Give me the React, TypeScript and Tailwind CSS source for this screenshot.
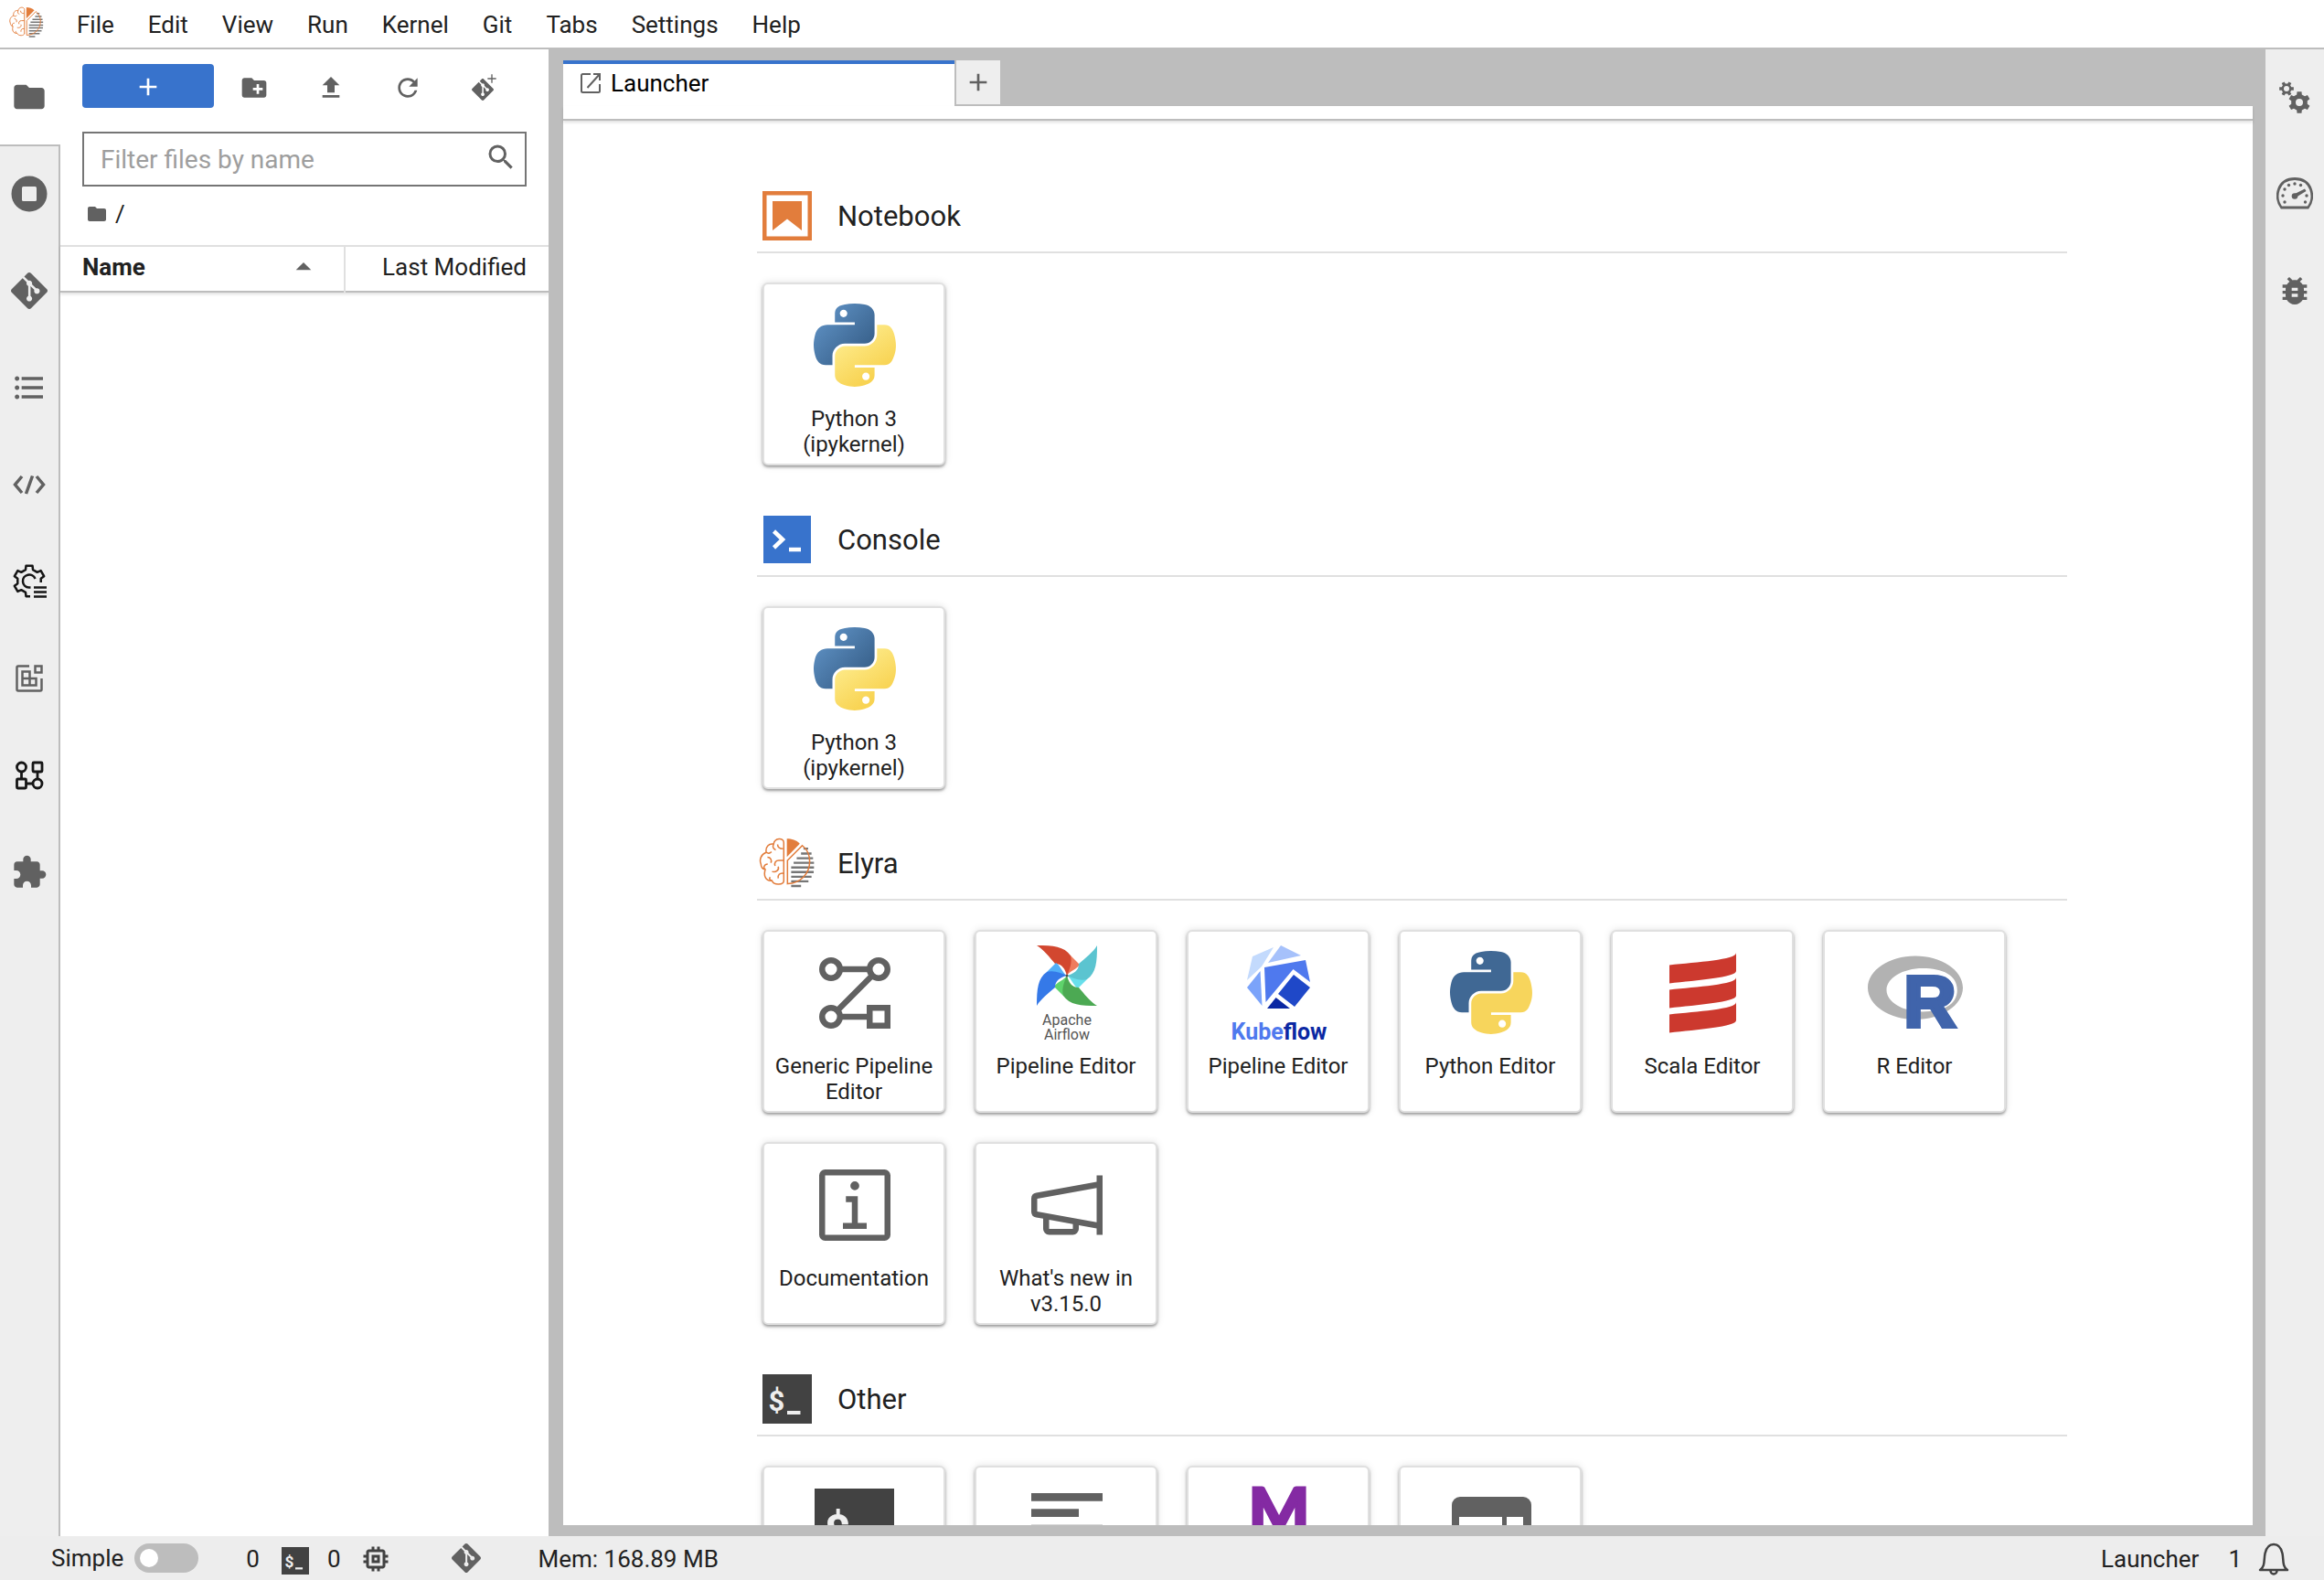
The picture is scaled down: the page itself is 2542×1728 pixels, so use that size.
import { useId, useState } from "react";
import type { ReactNode } from "react";
import {
  MdAdd,
  MdArrowDropUp,
  MdBugReport,
  MdCreateNewFolder,
  MdExtension,
  MdFileUpload,
  MdFolder,
  MdFormatAlignLeft,
  MdFormatListBulleted,
  MdMemory,
  MdRefresh,
  MdSearch,
} from "react-icons/md";
import { SiGit } from "react-icons/si";

const MENUS = ["File", "Edit", "View", "Run", "Kernel", "Git", "Tabs", "Settings", "Help"];

// Outline of a cog centred on cx, cy
function gearPath(cx: number, cy: number, outer: number, inner: number, teeth: number, start = -90) {
  const step = 360 / teeth;
  const points: string[] = [];
  for (let i = 0; i < teeth; i++) {
    const a = start + i * step;
    const corners = [
      [inner, -0.3],
      [outer, -0.2],
      [outer, 0.2],
      [inner, 0.3],
    ];
    corners.forEach(([r, k]) => {
      const rad = ((a + k * step) * Math.PI) / 180;
      points.push(`${(cx + r * Math.cos(rad)).toFixed(2)} ${(cy + r * Math.sin(rad)).toFixed(2)}`);
    });
  }
  return `M${points.join("L")}Z`;
}

function ElyraLogo({ className }: { className: string }) {
  return (
    <svg viewBox="18 18 182 166" className={className} fill="none" stroke="#e27d3c" strokeWidth="4.5">
      <g stroke="#767676" strokeWidth="7">
        <path d="M162 54h15M154 70h34M140 85h53M130 100h66M122 115h74M122 130h73M122 145h66M122 160h56M122 175h32" />
      </g>
      <path d="M108 22C124 22 138 26 150 38L108 81Z" fill="#e27d3c" stroke="none" />
      <path d="M110 92L158 44C176 58 182 76 182 96C182 136 152 166 110 168Z" />
      <path d="M98 160V34C98 18 68 18 65 40C60 50 66 56 72 58M65 39C50 36 38 48 41 66C24 72 18 90 24 104C24 114 30 120 38 122C32 140 38 160 60 158C66 174 98 172 98 158" />
      <path d="M78 40C78 50 84 54 96 54M41 66C46 70 54 70 58 64M45 82C56 82 60 92 56 100M38 120C30 118 34 104 46 104M98 92H82C72 92 66 100 70 110M80 112C84 124 72 132 60 128M60 158C52 156 50 150 54 146M98 134C84 132 78 140 80 150" />
    </svg>
  );
}

function PythonLogo({ gradient = false }: { gradient?: boolean }) {
  const id = useId();
  return (
    <svg viewBox="0 0 111.2 112.4" className="h-[91px] w-[90px]">
      <defs>
        <linearGradient id={`${id}b`} x1="0.1" y1="0.1" x2="0.8" y2="0.75">
          <stop offset="0" stopColor="#5f92c5" />
          <stop offset="1" stopColor="#3b648f" />
        </linearGradient>
        <linearGradient id={`${id}y`} x1="0.2" y1="0.25" x2="0.6" y2="0.85">
          <stop offset="0" stopColor="#fde986" />
          <stop offset="1" stopColor="#f8d352" />
        </linearGradient>
      </defs>
      <path
        fill={gradient ? `url(#${id}b)` : "#406894"}
        d="M54.92 0C50.34.02 45.96.41 42.11 1.09 30.76 3.1 28.7 7.29 28.7 15.03v10.22h26.81v3.41H18.64c-7.79 0-14.62 4.68-16.75 13.59-2.46 10.21-2.57 16.59 0 27.25 1.91 7.94 6.46 13.59 14.25 13.59h9.22V70.84c0-8.85 7.66-16.65 16.75-16.65h26.78c7.46 0 13.41-6.14 13.41-13.63V15.03c0-7.26-6.13-12.72-13.41-13.93C64.28.33 59.5-.02 54.92 0zM40.42 8.22c2.77 0 5.03 2.3 5.03 5.12 0 2.82-2.26 5.1-5.03 5.1-2.78 0-5.03-2.28-5.03-5.1 0-2.82 2.25-5.12 5.03-5.12z"
      />
      <path
        fill={gradient ? `url(#${id}y)` : "#f7d55c"}
        d="M85.64 28.66v11.9c0 9.23-7.83 17-16.75 17H42.11c-7.34 0-13.41 6.28-13.41 13.63v25.53c0 7.27 6.32 11.54 13.41 13.62 8.49 2.5 16.62 2.95 26.78 0 6.75-1.95 13.4-5.88 13.4-13.62V86.5H55.51v-3.41h40.19c7.79 0 10.7-5.43 13.41-13.59 2.8-8.4 2.68-16.48 0-27.25-1.93-7.76-5.61-13.59-13.41-13.59H85.64zM70.58 93.31c2.77 0 5.03 2.28 5.03 5.1 0 2.82-2.26 5.12-5.03 5.12-2.77 0-5.04-2.3-5.04-5.12 0-2.82 2.27-5.1 5.04-5.1z"
      />
    </svg>
  );
}

function NotebookIcon() {
  return (
    <svg viewBox="0 0 54 54" className="size-[54px]" fill="#e27d3c">
      <path fillRule="evenodd" d="M0 0h54v54H0zM4.500 4.500v45h45v-45z" />
      <path d="M11 11h32v32L27 30.500 11 43z" />
    </svg>
  );
}

function ConsoleIcon() {
  return (
    <svg viewBox="0 0 52 52" className="mx-px size-[52px]" fill="none" stroke="#fff" strokeWidth="4.500">
      <path fill="#3873cc" stroke="none" d="M0 0h52v52H0z" />
      <path d="M11.500 17l9.500 9-9.500 9M28 37h13" />
    </svg>
  );
}

function TerminalIcon({ className }: { className: string }) {
  return (
    <svg viewBox="0 0 54 54" className={className}>
      <path fill="#424242" d="M0 0h54v54H0z" />
      <text x="6.500" y="40" fontFamily="Roboto, sans-serif" fontWeight="700" fontSize="31" fill="#eee">
        $
      </text>
      <path fill="#eee" d="M27 40h14.500v4H27z" />
    </svg>
  );
}

function GenericPipelineIcon() {
  return (
    <svg viewBox="0 0 32 32" className="size-[104px]" fill="none" stroke="#616161" strokeWidth="2">
      <circle cx="8" cy="8" r="3" />
      <circle cx="24" cy="8" r="3" />
      <circle cx="8" cy="24" r="3" />
      <path d="M21 21h6v6h-6zM11 8h10M11 24h10M10.100 21.900L21.900 10.100" />
    </svg>
  );
}

function AirflowIcon() {
  const blades = [
    ["0", "#d2472f", "#ef7c5d"],
    ["90", "#5bc4d0", "#68dfeb"],
    ["180", "#4ca953", "#5fd36c"],
    ["270", "#3579e8", "#52aff8"],
  ];
  return (
    <svg viewBox="-19 -4 104 112" className="h-28 w-[104px]">
      {blades.map(([angle, dark, light]) => (
        <g key={angle} transform={`rotate(${angle} 33 33)`}>
          <path fill={light} d="M37 11L47 21C44 26 36 28 33 33Z" />
          <path fill={dark} d="M0 0C18 0 30 1 37 11C39 19 36 26 33 33C31 26 28 20 20 20C15 14 7 4 0 0Z" />
        </g>
      ))}
      <circle cx="33" cy="33" r="1.500" fill="#51504f" />
      <g fontFamily="Roboto, sans-serif" fontSize="16" fill="#555" textAnchor="middle">
        <text x="33" y="87">Apache</text>
        <text x="33" y="103">Airflow</text>
      </g>
    </svg>
  );
}

function KubeflowIcon() {
  return (
    <svg viewBox="-20 -8 110 120" className="h-[120px] w-[110px]">
      <path fill="#c3dafd" d="M6 12L29 2 16 23 0 38z" />
      <path fill="#a6c1fb" d="M37 0L59 11 23 19z" />
      <path fill="#4f79ee" d="M19 24L64 16 69 40 50.500 26 20.500 62z" />
      <path fill="#7ba3fa" d="M14.500 28L0 46 16.500 66z" />
      <path fill="#1f48c8" d="M51 32L69 46 52 67 34 53z" />
      <path fill="#0b28a3" d="M31.600 57L47 69H22z" />
      <text x="35" y="103" fontFamily="Roboto, sans-serif" fontWeight="700" fontSize="25" textAnchor="middle" fill="#4f79ee">
        Kube<tspan fill="#0b28a3">flow</tspan>
      </text>
    </svg>
  );
}

function ScalaIcon() {
  return (
    <svg viewBox="0 0 73 88" className="h-[88px] w-[73px]" fill="#cc392e">
      <path d="M0 13.500C30 10 73 8 73 0V20C73 27 30 30 0 33.500z" />
      <path d="M0 40.500C30 37 73 35 73 27V47C73 54 30 57 0 60.500z" />
      <path d="M0 67.500C30 64 73 62 73 54V74C73 81 30 84 0 87.500z" />
    </svg>
  );
}

function RIcon() {
  return (
    <svg viewBox="0 0 104 81" className="h-[81px] w-[104px] overflow-visible">
      <path
        fill="#b2b2b2"
        fillRule="evenodd"
        d="M52 .4C23.300 .4 0 16 0 35.200S23.300 69.900 52 69.900 104 54.400 104 35.200 80.700.4 52 .4zM60 14C81.700 14 97.800 21.300 97.800 37.800S81.700 61.500 60 61.500 20.500 50.900 20.500 37.800 38.200 14 60 14z"
      />
      <text
        x="39"
        y="78"
        fontFamily="Liberation Sans, sans-serif"
        fontWeight="700"
        fontSize="80"
        fill="#4064ab"
        stroke="#4064ab"
        strokeWidth="4"
      >
        R
      </text>
    </svg>
  );
}

function InfoIcon() {
  return (
    <svg viewBox="0 0 32 32" className="size-[104px]" fill="#616161">
      <path d="M17 22v-9h-4v2h2v7h-3v2h8v-2zM16 8a1.500 1.500 0 1 0 0 3 1.500 1.500 0 0 0 0-3z" />
      <path d="M26 28H6a2 2 0 0 1-2-2V6a2 2 0 0 1 2-2h20a2 2 0 0 1 2 2v20a2 2 0 0 1-2 2zM6 6v20h20V6z" />
    </svg>
  );
}

function MegaphoneIcon() {
  return (
    <svg viewBox="0 0 32 32" className="size-[104px]" fill="#616161">
      <path d="M26 6v2.170L5.640 11.870A2 2 0 0 0 4 13.830v4.340a2 2 0 0 0 1.640 2L8 20.560V24a2 2 0 0 0 2 2h8a2 2 0 0 0 2-2v-1.260l6 1.090V26h2V6zm-8 18h-8v-3.070l8 1.450zM6 18.170v-4.340l20-3.630v11.600z" />
    </svg>
  );
}

function MarkdownIcon() {
  return (
    <svg viewBox="0 0 104 104" className="size-[104px]" fill="#842aa3">
      <text
        x="52"
        y="58"
        fontFamily="Lato, sans-serif"
        fontWeight="900"
        fontSize="70"
        textAnchor="middle"
        stroke="#842aa3"
        strokeWidth="3"
      >
        M
      </text>
      <path d="M24 70h57L52 98z" />
    </svg>
  );
}

function HelpPanelIcon() {
  return (
    <svg viewBox="0 0 104 104" className="size-[104px]">
      <rect x="9" y="17" width="87" height="70" rx="9" fill="#616161" />
      <path fill="#fff" d="M17 39h47v40H17zM69 39h18v40H69z" />
    </svg>
  );
}

function RunningIcon() {
  return (
    <svg viewBox="0 0 40 40" className="size-10">
      <circle cx="20" cy="20" r="19.500" fill="#616161" />
      <rect x="12" y="12" width="16" height="16" rx="1.500" fill="#eee" />
    </svg>
  );
}

function SnippetIcon() {
  return (
    <svg viewBox="0 0 40 40" className="size-10" fill="none" stroke="#616161" strokeWidth="3.500">
      <path d="M12 11L4.500 20 12 29M28 11l7.500 9-7.500 9M23.500 10.500l-7 19.500" />
    </svg>
  );
}

function RuntimesIcon() {
  return (
    <svg viewBox="0 0 40 40" className="size-10" fill="none" stroke="#161616" strokeWidth="2.500">
      <path d={gearPath(20, 19.500, 17, 13, 6)} strokeLinejoin="round" />
      <path fill="#eee" stroke="none" d="M21 26h5l2-5 12 0v19H21z" />
      <path d="M26.500 17a7 7 0 1 0-7 9.500h2M25 26.500h14M25 31.500h14M25 36.500h14" />
    </svg>
  );
}

function CatalogIcon() {
  return (
    <svg viewBox="0 0 40 40" className="size-10" fill="none" stroke="#616161" strokeWidth="2.500">
      <path d="M20 6.500H8A1.500 1.500 0 0 0 6.500 8v24A1.500 1.500 0 0 0 8 33.500h24a1.500 1.500 0 0 0 1.500-1.500V20" />
      <path d="M26.500 6.500h7v7h-7zM12.500 12.500h8v15h-8zM12.500 20h15v7.500h-15z" />
    </svg>
  );
}

function PipelinesIcon() {
  return (
    <svg viewBox="0 0 40 40" className="size-10" fill="none" stroke="#161616" strokeWidth="2.800">
      <circle cx="11.500" cy="11" r="5" />
      <rect x="24" y="6" width="10" height="10" rx="1" />
      <rect x="6.500" y="24" width="10" height="10" rx="1" />
      <circle cx="29" cy="29" r="5" />
      <path d="M11.500 16v8M29 16v8M16.500 29H24" />
    </svg>
  );
}

function GearsIcon() {
  return (
    <svg viewBox="0 0 40 40" className="size-10" fill="#616161" fillRule="evenodd">
      <path d={`${gearPath(11, 11, 8, 5.500, 6, -60)}M11 8a3 3 0 1 0 0 6 3 3 0 0 0 0-6z`} />
      <path d={`${gearPath(25, 26, 12, 9, 6)}M25 22a4 4 0 1 0 0 8 4 4 0 0 0 0-8z`} />
    </svg>
  );
}

function GaugeIcon() {
  const dots = [
    [7, 20],
    [9, 13],
    [13.500, 8.500],
    [20, 7],
    [26.500, 8.500],
    [33, 20],
    [9, 27],
    [31.500, 27],
  ];
  return (
    <svg viewBox="0 0 40 36" className="h-9 w-10" fill="#616161">
      <path fill="none" stroke="#616161" strokeWidth="2.800" d="M5.500 33C-3 22 1 1.500 20 1.500S43 22 34.500 33z" />
      {dots.map(([x, y]) => (
        <circle key={`${x}-${y}`} cx={x} cy={y} r="1.700" />
      ))}
      <circle cx="20" cy="20.500" r="3.300" />
      <path d="M19 18.500L31 12.500l1.500 2.500L21 22z" />
    </svg>
  );
}

function GitCloneIcon() {
  return (
    <span className="relative block size-8 text-[#616161]">
      <SiGit className="absolute bottom-0.5 left-0.5 size-6" />
      <MdAdd className="absolute -top-0.5 right-0 size-4" />
    </span>
  );
}

function LauncherTabIcon() {
  return (
    <svg viewBox="0 0 24 24" className="size-6" fill="none" stroke="#616161" strokeWidth="2">
      <path d="M12 2H3.500A1.500 1.500 0 0 0 2 3.500v17A1.500 1.500 0 0 0 3.500 22h17a1.500 1.500 0 0 0 1.500-1.500V13M15 2h7v7M22 2L8.500 17" />
    </svg>
  );
}

function BellIcon() {
  return (
    <svg viewBox="0 0 34 36" className="h-9 w-[34px]" fill="none" stroke="#424242" strokeWidth="2.500">
      <path d="M2 30C8 26 6 19 7.500 12 9 5 13 2 17 2s8 3 9.500 10C28 19 26 26 32 30z" strokeLinejoin="round" />
      <path d="M13.500 31a3.500 3.500 0 0 0 7 0" />
    </svg>
  );
}

const LEFT_TABS: { label: string; icon: ReactNode }[] = [
  { label: "File Browser", icon: <MdFolder className="size-10" /> },
  { label: "Running Terminals and Kernels", icon: <RunningIcon /> },
  { label: "Git", icon: <SiGit className="size-10" /> },
  { label: "Table of Contents", icon: <MdFormatListBulleted className="size-10" /> },
  { label: "Code Snippets", icon: <SnippetIcon /> },
  { label: "Runtimes", icon: <RuntimesIcon /> },
  { label: "Component Catalogs", icon: <CatalogIcon /> },
  { label: "Runtime Images", icon: <PipelinesIcon /> },
  { label: "Extension Manager", icon: <MdExtension className="size-10" /> },
];

const RIGHT_TABS: { label: string; icon: ReactNode }[] = [
  { label: "Property Inspector", icon: <GearsIcon /> },
  { label: "Kernel Usage", icon: <GaugeIcon /> },
  { label: "Debugger", icon: <MdBugReport className="size-10" /> },
];

type Section = {
  title: string;
  icon: ReactNode;
  cards: { label: string; icon: ReactNode }[];
};

const SECTIONS: Section[] = [
  {
    title: "Notebook",
    icon: <NotebookIcon />,
    cards: [{ label: "Python 3 (ipykernel)", icon: <PythonLogo gradient /> }],
  },
  {
    title: "Console",
    icon: <ConsoleIcon />,
    cards: [{ label: "Python 3 (ipykernel)", icon: <PythonLogo gradient /> }],
  },
  {
    title: "Elyra",
    icon: <ElyraLogo className="-mx-1 h-[56px] w-[62px]" />,
    cards: [
      { label: "Generic Pipeline Editor", icon: <GenericPipelineIcon /> },
      { label: "Pipeline Editor", icon: <AirflowIcon /> },
      { label: "Pipeline Editor", icon: <KubeflowIcon /> },
      { label: "Python Editor", icon: <PythonLogo /> },
      { label: "Scala Editor", icon: <ScalaIcon /> },
      { label: "R Editor", icon: <RIcon /> },
      { label: "Documentation", icon: <InfoIcon /> },
      { label: "What's new in v3.15.0", icon: <MegaphoneIcon /> },
    ],
  },
  {
    title: "Other",
    icon: <TerminalIcon className="size-[54px]" />,
    cards: [
      { label: "Terminal", icon: <TerminalIcon className="size-[87px]" /> },
      { label: "Text File", icon: <MdFormatAlignLeft className="size-[104px] text-[#616161]" /> },
      { label: "Markdown File", icon: <MarkdownIcon /> },
      { label: "Show Contextual Help", icon: <HelpPanelIcon /> },
    ],
  },
];

function LauncherSection({ title, icon, cards }: Section) {
  return (
    <section className="mb-[49px]">
      <div className="flex items-center gap-7 border-b-2 border-[#e0e0e0] pb-[7px] pl-1.5">
        <div className="flex h-16 items-center">{icon}</div>
        <h2 className="pt-0.5 text-[31px] leading-10">{title}</h2>
      </div>
      <div className="flex flex-wrap gap-8 pt-8 pl-1.5">
        {cards.map((card, i) => (
          <button
            key={i}
            className="flex size-[200px] flex-col items-center rounded-md border-2 border-[#e0e0e0] bg-white shadow-[0_2px_3px_rgba(0,0,0,0.35),0_0_8px_rgba(0,0,0,0.12)]"
          >
            <span className="flex h-[133px] shrink-0 items-center justify-center pl-px">{card.icon}</span>
            <span className="px-2 text-center text-2xl leading-7">{card.label}</span>
          </button>
        ))}
      </div>
    </section>
  );
}

function FileBrowser() {
  const [filter, setFilter] = useState("");

  return (
    <aside className="flex w-[534px] shrink-0 flex-col bg-white">
      <div className="flex px-6 pt-4">
        <button aria-label="New Launcher" className="mr-0.5 flex h-12 w-36 items-center justify-center rounded bg-[#3873cc] pt-0.5 text-white">
          <MdAdd className="size-8" />
        </button>
        <button aria-label="New Folder" className="flex h-[52px] w-21 items-center justify-center text-[#616161]">
          <MdCreateNewFolder className="size-8" />
        </button>
        <button aria-label="Upload Files" className="flex h-[52px] w-21 items-center justify-center text-[#616161]">
          <MdFileUpload className="size-8" />
        </button>
        <button aria-label="Refresh" className="flex h-[52px] w-21 items-center justify-center text-[#616161]">
          <MdRefresh className="size-8" />
        </button>
        <button aria-label="Git Clone" className="flex h-[52px] w-21 items-center justify-center">
          <GitCloneIcon />
        </button>
      </div>

      <label className="mx-6 mt-[22px] flex h-[60px] items-center border-2 border-[#757575] pr-2 pl-[18px]">
        <input
          type="text"
          aria-label="Filter files by name"
          placeholder="Filter files by name"
          value={filter}
          onChange={(e) => setFilter(e.target.value)}
          className="min-w-0 flex-1 pt-0.5 text-[28px] leading-9 outline-none placeholder:text-[#9e9e9e]"
        />
        <MdSearch className="mb-1 size-9 text-[#616161]" />
      </label>

      <div className="flex h-16 items-center gap-2 px-7 pb-1 text-[26px] leading-8">
        <MdFolder className="size-6 text-[#616161]" />
        <span>/</span>
      </div>

      <table className="w-full table-fixed text-[26px] leading-8 shadow-[0_2px_3px_rgba(0,0,0,0.12)]">
        <thead>
          <tr className="h-[50px] border-t-2 border-b-2 border-t-[#e0e0e0] border-b-[#bdbdbd]">
            <th className="w-[311px] border-r-2 border-[#e0e0e0] p-0 pr-6 pl-6">
              <div className="flex items-center justify-between pb-1">
                <span className="font-bold">Name</span>
                <MdArrowDropUp className="-my-1 size-10 text-[#616161]" />
              </div>
            </th>
            <th className="p-0 pr-6 pb-1 text-right font-normal">Last Modified</th>
          </tr>
        </thead>
      </table>
    </aside>
  );
}

function StatusBar() {
  const [simple, setSimple] = useState(false);

  return (
    <footer className="flex h-12 shrink-0 items-center bg-[#ededed] pr-[38px] pl-14 text-[26px] leading-8">
      <label htmlFor="simple-mode">Simple</label>
      <input
        id="simple-mode"
        type="checkbox"
        checked={simple}
        onChange={(e) => setSimple(e.target.checked)}
        className="ml-3 flex h-8 w-[70px] appearance-none items-center rounded-full bg-[#bdbdbd] px-1.5 before:size-5 before:rounded-full before:bg-white before:content-['']"
      />
      <div className="ml-[52px] flex items-center gap-5 pt-0.5">
        <span className="pr-1">0</span>
        <TerminalIcon className="mt-1 size-[30px]" />
        <span>0</span>
        <MdMemory className="size-9 text-[#424242]" />
      </div>
      <SiGit className="ml-[65px] size-8 text-[#616161]" />
      <span className="ml-[63px] pt-0.5">Mem: 168.89 MB</span>
      <span className="ml-auto pt-0.5">Launcher</span>
      <span className="ml-8 pt-0.5">1</span>
      <span className="ml-[18px] pt-0.5">
        <BellIcon />
      </span>
    </footer>
  );
}

export default function App() {
  const [activeTab, setActiveTab] = useState("File Browser");

  return (
    <div className="flex h-screen flex-col overflow-hidden bg-[#eeeeee] font-[Roboto,sans-serif] text-[#212121]">
      <header className="flex h-[54px] shrink-0 items-center border-b-2 border-[#bdbdbd] bg-white pl-2.5">
        <ElyraLogo className="mr-[18px] mb-1 h-[35px] w-[38px]" />
        <nav className="flex gap-px pt-0.5 text-[26px] leading-8">
          {MENUS.map((menu) => (
            <button key={menu} className="px-[18px]">
              {menu}
            </button>
          ))}
        </nav>
      </header>

      <div className="flex min-h-0 flex-1">
        <nav className="flex w-[66px] shrink-0 flex-col text-[#616161]">
          {LEFT_TABS.map((tab) => (
            <button
              key={tab.label}
              aria-label={tab.label}
              onClick={() => setActiveTab(tab.label)}
              className={
                tab.label === activeTab
                  ? "flex h-[106px] items-center justify-center border-b-2 border-[#bdbdbd] bg-white pr-0.5"
                  : "flex h-[106px] items-center justify-center border-r-2 border-[#bdbdbd] pb-0.5"
              }
            >
              {tab.icon}
            </button>
          ))}
          <div className="flex-1 border-r-2 border-[#bdbdbd]" />
        </nav>

        <FileBrowser />

        <main className="flex min-w-0 flex-1 flex-col bg-[#bdbdbd] pt-3 pr-3.5 pb-3 pl-4">
          <div className="flex">
            <button className="flex h-[50px] w-[428px] items-center gap-2.5 border-t-4 border-[#3873cc] bg-white pb-1 pl-[18px] text-[26px] leading-8 text-black">
              <LauncherTabIcon />
              Launcher
            </button>
            <button aria-label="Add tab" className="ml-0.5 flex size-12 items-center justify-center bg-[#eeeeee] text-[#616161]">
              <MdAdd className="size-8" />
            </button>
          </div>
          <div className="z-10 h-4 shrink-0 border-b-2 border-[#bdbdbd] bg-white shadow-[0_2px_3px_rgba(0,0,0,0.12)]" />
          <div className="min-h-0 flex-1 overflow-hidden bg-white pt-[72px] pr-[203px] pl-[212px]">
            {SECTIONS.map((section) => (
              <LauncherSection key={section.title} {...section} />
            ))}
          </div>
        </main>

        <nav className="flex w-16 shrink-0 flex-col text-[#616161]">
          {RIGHT_TABS.map((tab) => (
            <button key={tab.label} aria-label={tab.label} className="flex h-[106px] items-center justify-center pb-0.5">
              {tab.icon}
            </button>
          ))}
        </nav>
      </div>

      <StatusBar />
    </div>
  );
}
